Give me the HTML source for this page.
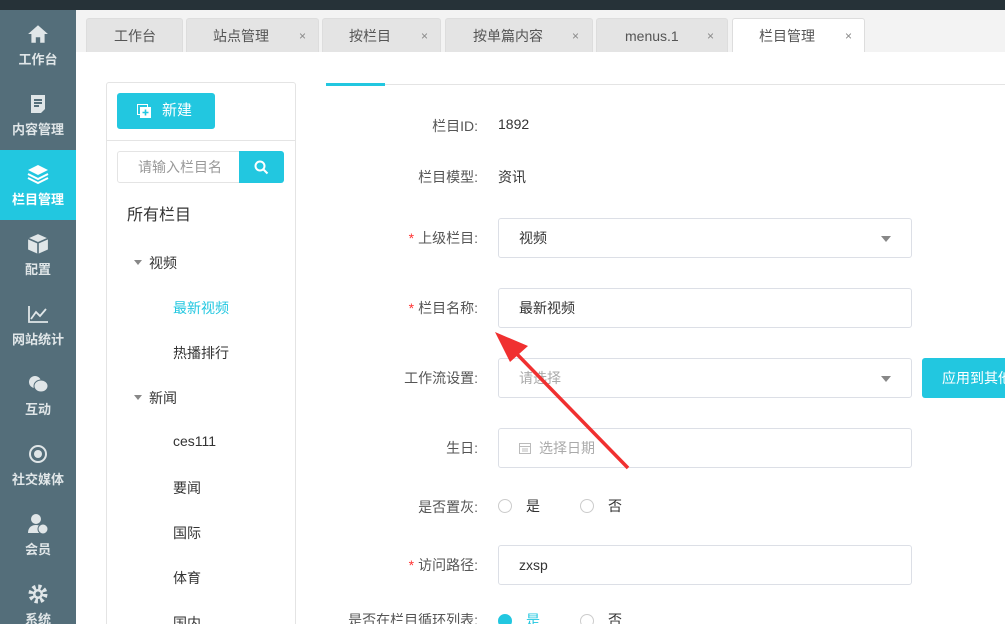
<!DOCTYPE html>
<html style="overflow:hidden;width:1005px;height:624px"><head><meta charset="utf-8"><style>
*{margin:0;padding:0;box-sizing:border-box}
body{width:1005px;height:624px;overflow:hidden;position:relative;background:#fff;font-family:"Liberation Sans","Noto Sans CJK SC",sans-serif;font-size:14px;color:#333}
.top{position:absolute;left:0;top:0;width:1005px;height:10px;background:#263238}
.side{position:absolute;left:0;top:10px;width:76px;height:614px;background:#546e7a;overflow:hidden}
.si{position:absolute;left:0;width:76px;height:70px;text-align:center;color:#e0e6e8;font-size:13px;font-weight:bold}
.si svg{display:block;margin:13px auto 4px}
.si.act{background:#22c7e0;color:#fff}
.tabs{position:absolute;left:76px;top:10px;width:929px;height:42px;background:#f3f3f3}
.tab{position:absolute;top:8px;height:34px;background:#e4e4e4;border:1px solid #ddd;border-bottom:none;border-radius:3px 3px 0 0;color:#555;font-size:14px;line-height:34px}
.tab .t{position:absolute;top:0}
.tab .x{position:absolute;top:0;color:#888;font-size:12px}
.tab.on{background:#fff}
.panel{position:absolute;left:106px;top:82px;width:190px;height:560px;border:1px solid #e4e4e4;border-radius:3px}
.btn{position:absolute;left:117px;top:93px;width:98px;height:36px;background:#22c7e0;border-radius:3px;color:#fff;font-size:15px;line-height:36px}
.tree{position:absolute;font-size:14px;color:#333}
.lbl{position:absolute;text-align:right;width:180px;left:298px;color:#555;font-size:14px}
.inp{position:absolute;left:498px;width:414px;height:40px;border:1px solid #dcdfe6;border-radius:3px;font-size:14px;line-height:38px;padding-left:20px;color:#333}
.req{color:#f33;margin-right:4px}
.caret{position:absolute;right:20px;top:17px;border:5px solid transparent;border-top:6px solid #888}
.radio{position:absolute;width:14px;height:14px;border:1px solid #ccc;border-radius:50%}
</style></head><body>
<div class="top"></div>
<div class="side">
 <div class="si" style="top:0"><svg width="22" height="22" viewBox="0 0 20 20"><path d="M10 2L1 10h3v8h4v-5h4v5h4v-8h3z" fill="#e0e6e8"/></svg>工作台</div>
 <div class="si" style="top:70px"><svg width="20" height="22" viewBox="0 0 20 22"><path d="M3 2h14v14l-4 4H3z" fill="#e0e6e8"/><path d="M6 7h8M6 10h8M6 13h5" stroke="#546e7a" stroke-width="2"/></svg>内容管理</div>
 <div class="si act" style="top:140px"><svg width="22" height="22" viewBox="0 0 22 20"><path d="M11 1L1 6l10 5 10-5z" fill="#fff"/><path d="M1 10l10 5 10-5M1 14l10 5 10-5" stroke="#fff" stroke-width="2" fill="none"/></svg>栏目管理</div>
 <div class="si" style="top:210px"><svg width="22" height="22" viewBox="0 0 20 20"><path d="M10 1l9 4v10l-9 4-9-4V5z" fill="#e0e6e8"/><path d="M1 5l9 4 9-4M10 9v10" stroke="#546e7a" stroke-width="1.5" fill="none"/></svg>配置</div>
 <div class="si" style="top:280px"><svg width="22" height="22" viewBox="0 0 22 20"><path d="M2 2v16h19M4 15l5-7 4 4 6-7" stroke="#e0e6e8" stroke-width="1.8" fill="none"/></svg>网站统计</div>
 <div class="si" style="top:350px"><svg width="22" height="22" viewBox="0 0 22 20"><circle cx="8" cy="8" r="6" fill="#e0e6e8"/><ellipse cx="14" cy="12" rx="7" ry="6" fill="#e0e6e8" stroke="#546e7a"/></svg>互动</div>
 <div class="si" style="top:420px"><svg width="22" height="22" viewBox="0 0 22 22"><circle cx="11" cy="11" r="8" stroke="#e0e6e8" stroke-width="2" fill="none"/><circle cx="11" cy="11" r="4" fill="#e0e6e8"/></svg>社交媒体</div>
 <div class="si" style="top:490px"><svg width="22" height="22" viewBox="0 0 22 22"><circle cx="9" cy="6" r="5" fill="#e0e6e8"/><path d="M1 20c0-6 4-8 8-8s6 2 6 3v5z" fill="#e0e6e8"/><circle cx="16" cy="16" r="5" fill="#e0e6e8" stroke="#546e7a"/></svg>会员</div>
 <div class="si" style="top:560px"><svg width="22" height="22" viewBox="0 0 22 22"><circle cx="11" cy="11" r="7" stroke="#e0e6e8" stroke-width="5" stroke-dasharray="3 2.5" fill="none"/><circle cx="11" cy="11" r="5" fill="#e0e6e8"/><circle cx="11" cy="11" r="2.5" fill="#546e7a"/></svg>系统</div>
</div>
<div class="tabs">
 <div class="tab" style="left:10px;width:97px"><span class="t" style="left:27px">工作台</span></div>
 <div class="tab" style="left:110px;width:133px"><span class="t" style="left:26px">站点管理</span><span class="x" style="left:112px">×</span></div>
 <div class="tab" style="left:246px;width:119px"><span class="t" style="left:26px">按栏目</span><span class="x" style="left:98px">×</span></div>
 <div class="tab" style="left:369px;width:148px"><span class="t" style="left:27px">按单篇内容</span><span class="x" style="left:126px">×</span></div>
 <div class="tab" style="left:520px;width:132px"><span class="t" style="left:28px">menus.1</span><span class="x" style="left:110px">×</span></div>
 <div class="tab on" style="left:656px;width:133px"><span class="t" style="left:26px">栏目管理</span><span class="x" style="left:112px">×</span></div>
</div>
<div style="position:absolute;left:326px;top:84px;width:679px;height:1px;background:#e4e4e4"></div>
<div style="position:absolute;left:326px;top:83px;width:59px;height:3px;background:#22c7e0"></div>
<div class="panel"></div>
<div style="position:absolute;left:107px;top:140px;width:188px;height:1px;background:#e4e4e4"></div>
<div class="btn"><svg style="position:absolute;left:20px;top:11px" width="15" height="15" viewBox="0 0 15 15"><rect x="0.5" y="0.5" width="10" height="10" fill="none" stroke="#fff"/><rect x="3" y="3" width="11" height="11" fill="#fff"/><path d="M8.5 5.5v6M5.5 8.5h6" stroke="#22c7e0" stroke-width="1.6"/></svg><span style="position:absolute;left:45px">新建</span></div>
<div style="position:absolute;left:117px;top:151px;width:124px;height:32px;border:1px solid #e4e4e4;border-radius:3px 0 0 3px;color:#999;font-size:14px;line-height:30px;padding-left:20px">请输入栏目名</div>
<div style="position:absolute;left:239px;top:151px;width:45px;height:32px;background:#22c7e0;border-radius:0 3px 3px 0"><svg style="position:absolute;left:15px;top:9px" width="15" height="15" viewBox="0 0 15 15"><circle cx="6" cy="6" r="4.5" stroke="#fff" stroke-width="2" fill="none"/><path d="M9.5 9.5l4 4" stroke="#fff" stroke-width="2"/></svg></div>
<div class="tree" style="left:127px;top:201px;font-size:16px">所有栏目</div>
<div style="position:absolute;left:134px;top:260px;border:4px solid transparent;border-top:5px solid #888"></div>
<div class="tree" style="left:149px;top:253px">视频</div>
<div class="tree" style="left:173px;top:298px;color:#22c7e0">最新视频</div>
<div class="tree" style="left:173px;top:343px">热播排行</div>
<div style="position:absolute;left:134px;top:395px;border:4px solid transparent;border-top:5px solid #888"></div>
<div class="tree" style="left:149px;top:388px">新闻</div>
<div class="tree" style="left:173px;top:433px">ces111</div>
<div class="tree" style="left:173px;top:478px">要闻</div>
<div class="tree" style="left:173px;top:523px">国际</div>
<div class="tree" style="left:173px;top:568px">体育</div>
<div class="tree" style="left:173px;top:613px">国内</div>

<div class="lbl" style="top:116px">栏目ID:</div><div style="position:absolute;left:498px;top:116px">1892</div>
<div class="lbl" style="top:167px">栏目模型:</div><div style="position:absolute;left:498px;top:167px">资讯</div>
<div class="lbl" style="top:228px"><span class="req">*</span>上级栏目:</div><div class="inp" style="top:218px">视频<i class="caret"></i></div>
<div class="lbl" style="top:298px"><span class="req">*</span>栏目名称:</div><div class="inp" style="top:288px">最新视频</div>
<div class="lbl" style="top:368px">工作流设置:</div><div class="inp" style="top:358px;color:#aaa">请选择<i class="caret"></i></div>
<div style="position:absolute;left:922px;top:358px;width:100px;height:40px;background:#22c7e0;border-radius:3px;color:#fff;line-height:40px;padding-left:20px">应用到其他</div>
<div class="lbl" style="top:438px">生日:</div><div class="inp" style="top:428px;color:#aaa;padding-left:40px"><svg style="position:absolute;left:20px;top:13px" width="12" height="12" viewBox="0 0 12 12"><rect x="0.5" y="1.5" width="11" height="10" fill="none" stroke="#bbb"/><path d="M0.5 4.5h11M3 7h6M3 9h6" stroke="#bbb"/></svg>选择日期</div>
<div class="lbl" style="top:497px">是否置灰:</div>
<div class="radio" style="left:498px;top:499px"></div><div style="position:absolute;left:526px;top:496px">是</div>
<div class="radio" style="left:580px;top:499px"></div><div style="position:absolute;left:608px;top:496px">否</div>
<div class="lbl" style="top:555px"><span class="req">*</span>访问路径:</div><div class="inp" style="top:545px">zxsp</div>
<div class="lbl" style="top:610px;left:270px;width:208px">是否在栏目循环列表:</div>
<div class="radio" style="left:498px;top:614px;background:#22c7e0;border-color:#22c7e0"></div><div style="position:absolute;left:526px;top:610px;color:#22c7e0">是</div>
<div class="radio" style="left:580px;top:614px"></div><div style="position:absolute;left:608px;top:610px">否</div>
<svg style="position:absolute;left:0;top:0" width="1005" height="624"><path d="M628 468L513 350" stroke="#f03030" stroke-width="3.5"/><path d="M495 332L528 346L510 362Z" fill="#f03030"/></svg>
</body></html>
